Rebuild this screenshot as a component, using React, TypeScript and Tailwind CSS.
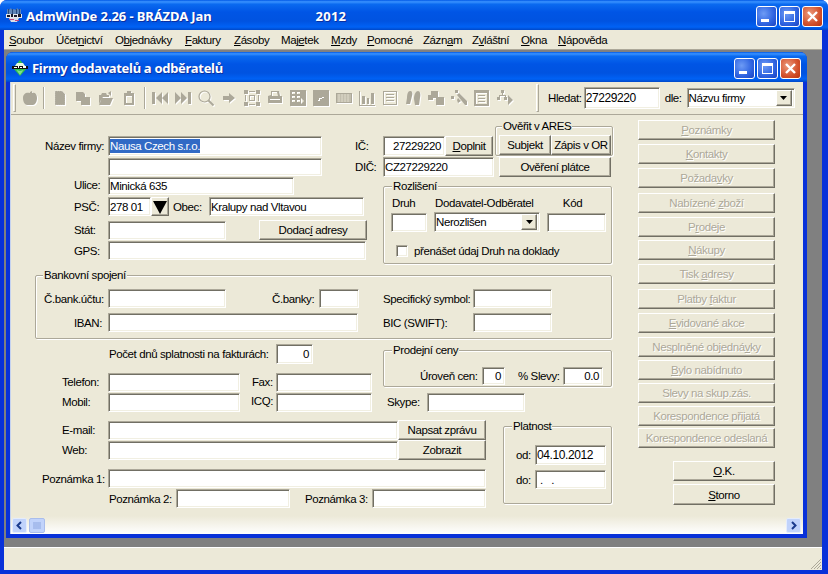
import React from "react";

const sunken =
  "border border-t-[#aca899] border-l-[#aca899] border-b-white border-r-white shadow-[inset_1px_1px_0_#716f64,inset_-1px_-1px_0_#f1efe2] bg-white shrink-0 flex items-center pl-[1px] pr-[3px] whitespace-nowrap overflow-hidden";
const raised =
  "border border-t-white border-l-white border-b-[#716f64] border-r-[#716f64] shadow-[inset_-1px_-1px_0_#aca899] bg-[#ece9d8] shrink-0 flex items-center justify-center whitespace-nowrap";

function Input({ className = "", children }: { className?: string; children?: React.ReactNode }) {
  return <div className={sunken + " " + className}>{children}</div>;
}
function Btn({ className = "", children }: { className?: string; children?: React.ReactNode }) {
  return <div className={raised + " " + className}>{children}</div>;
}
function Off({ className = "", children }: { className?: string; children?: React.ReactNode }) {
  return (
    <div className={raised + " h-[20px] text-[#aca899] [text-shadow:1px_1px_0_#fff] " + className}>{children}</div>
  );
}
function L({ className = "", children }: { className?: string; children?: React.ReactNode }) {
  return <div className={"shrink-0 whitespace-nowrap " + className}>{children}</div>;
}
function Group({ title, className = "", titleClass = "left-[8px]", children }: { title: string; className?: string; titleClass?: string; children?: React.ReactNode }) {
  return (
    <div className={"relative shrink-0 border border-[#aca899] rounded-[2px] shadow-[1px_1px_0_#fff,inset_1px_1px_0_#fff] " + className}>
      <span className={"absolute -top-[8px] bg-[#ece9d8] px-[1px] leading-[14px] whitespace-nowrap " + titleClass}>{title}</span>
      {children}
    </div>
  );
}
function Arrow({ small = false }: { small?: boolean }) {
  return small ? (
    <svg width="7" height="4" viewBox="0 0 7 4"><path d="M0 0h7L3.5 4z" fill="#000" /></svg>
  ) : (
    <svg width="14" height="14" viewBox="0 0 14 14"><path d="M0 1h14L7 14z" fill="#000" /></svg>
  );
}
function WinBtn({ kind }: { kind: "min" | "max" | "close" }) {
  const bg =
    kind === "close"
      ? "bg-[radial-gradient(circle_at_35%_35%,#ec9a7c,#d3512c_60%,#b9330f)]"
      : "bg-[radial-gradient(circle_at_35%_35%,#6d9bf5,#2e63e0_60%,#1c42c0)]";
  return (
    <div className={"w-[21px] h-[21px] rounded-[3px] border border-white flex items-center justify-center shrink-0 " + bg}>
      <svg width="15" height="15" viewBox="0 0 15 15">
        {kind === "min" && <rect x="2" y="10" width="8" height="3" fill="#fff" />}
        {kind === "max" && <path d="M2 2h11v11H2zM3 5v7h9V5z" fill="#fff" fillRule="evenodd" />}
        {kind === "close" && <path d="M3 3l9 9M12 3l-9 9" stroke="#fff" strokeWidth="2.4" />}
      </svg>
    </div>
  );
}

const G = "#aca899";
const icons: React.ReactNode[] = [
  <path d="M8 2l2-1v2c3-1 5 1 5 5 0 4-2 7-4 7H5C3 15 1 12 1 8c0-4 3-6 7-5z" fill={G} />,
  <path d="M3 1h7l3 3v11H3z" fill={G} stroke="#fff" strokeWidth=".3" strokeDasharray="1 1" />,
  <path d="M1 2h7l2 2v3h5v8H6v-4H1z" fill={G} />,
  <path d="M1 14V5h2l1-2h4l1 2h2v2H5l-2 3zM1 15l3-7h11l-3 7zM10 3l3-2v5z" fill={G} />,
  <path d="M3 3h3V1h4v2h3v12H3zM5 6v7h6V6z" fill={G} fillRule="evenodd" />,
];
const icons2: React.ReactNode[] = [
  <path d="M0 2h3v12H0zM10 2v12L4 8zM16 2v12L10 8z" fill={G} />,
  <path d="M0 2v12l6-6zM6 2v12l6-6zM13 2h3v12h-3z" fill={G} />,
  <g fill="none" stroke={G}><circle cx="6.5" cy="6.5" r="5.5" strokeWidth="1.2" /><path d="M10.5 10.5l5 5" strokeWidth="2" /></g>,
  <path d="M2 6h6V3l6 5-6 5v-3H2z" fill={G} />,
  <path d="M0 0h4v4H0zM12 0h4v4h-4zM0 12h4v4H0zM12 12h4v4h-4zM5 1h6v1H5zM1 5h1v6H1zM14 5h1v6h-1zM5 14h6v1H5zM5 5h6v6H5zM6 6v4h4V6z" fill={G} fillRule="evenodd" />,
  <path d="M4 1h8l1 5h2v7H1V6l3-1zM5 2v4h6l-1-4zM3 9v1h10V9z" fill={G} fillRule="evenodd" />,
  <path d="M0 0h16v16H0zM2 2v2h3V2zM7 2v2h3V2zM2 6v2h3V6zM7 6v2h3V6zM2 10v2h3v-2zM7 10v2h3v-2zM11 8l3 3-3 3z" fill={G} fillRule="evenodd" />,
  <path d="M0 0h16v16H0zM5 10v1h2V9h2V8H6v2zM9 7v1h2V7z" fill={G} fillRule="evenodd" />,
  <g><rect x="0" y="3" width="16" height="10" fill={G} /><path d="M1 5h14M1 7h14M1 9h14M1 11h14M3 4v8M6 4v8M9 4v8M12 4v8" stroke="#ece9d8" strokeWidth=".7" /></g>,
  <path d="M0 1h1v14h15v1H0zM3 6h3v8H3zM8 8h2v6H8zM12 3h3v11h-3z" fill={G} />,
  <path d="M1 1h14v14H1zM2 2v12h12V2zM4 4h8v1H4zM4 7h8v1H4zM4 10h8v1H4z" fill={G} fillRule="evenodd" />,
  <path d="M5 1c2 0 3 2 2 5l-2 8H1l1-6c0-4 1-7 3-7zM13 1c2 0 3 3 2 7l-1 7h-4l-1-6c0-5 2-8 4-8z" fill={G} />,
  <g fill={G}><rect x="3" y="1" width="7" height="7" /><rect x="0" y="5" width="5" height="5" /><rect x="8" y="7" width="8" height="8" /></g>,
  <g fill={G}><rect x="4" y="0" width="3" height="3" /><rect x="0" y="6" width="3" height="3" /><path d="M6 5l2-2 8 8v4h-2zM7 8l3 3-3 2-1-3z" /></g>,
  <path d="M0 0h15v16H0zM2 3v11h11V3zM4 5h7v1H4zM4 8h7v1H4zM4 11h7v1H4z" fill={G} fillRule="evenodd" />,
  <g fill={G}><rect x="4" y="0" width="3" height="3" /><rect x="0" y="7" width="3" height="3" /><rect x="7" y="7" width="3" height="3" /><path d="M5 3h1v2h3v2H8V6H3v1H2V5h3zM11 5l5 5-5 5z" /></g>,
];

function Tb({ children }: { children: React.ReactNode }) {
  return (
    <div className="w-[23px] h-[16px] flex items-center justify-center shrink-0">
      <svg width="16" height="16" viewBox="0 0 16 16" className="drop-shadow-[1px_1px_0_#fff]">{children}</svg>
    </div>
  );
}
const Sep = ({ className = "" }: { className?: string }) => (
  <div className={"w-[2px] h-[22px] bg-[#aca899] border-r border-white shrink-0 " + className} />
);
const Grip = ({ className = "" }: { className?: string }) => (
  <div className={"w-[3px] h-[28px] bg-[#ece9d8] border border-t-white border-l-white border-b-[#aca899] border-r-[#aca899] shrink-0 " + className} />
);

const menu: [string, React.ReactNode][] = [
  ["w-[47px]", <><u>S</u>oubor</>],
  ["w-[59px]", <>Účet<u>n</u>ictví</>],
  ["w-[70px]", <>O<u>b</u>jednávky</>],
  ["w-[49px]", <><u>F</u>aktury</>],
  ["w-[47px]", <><u>Z</u>ásoby</>],
  ["w-[50px]", <>Maj<u>e</u>tek</>],
  ["w-[36px]", <><u>M</u>zdy</>],
  ["w-[56px]", <><u>P</u>omocné</>],
  ["w-[49px]", <>Zázn<u>a</u>m</>],
  ["w-[49px]", <>Z<u>v</u>láštní</>],
  ["w-[37px]", <><u>O</u>kna</>],
  ["w-[60px]", <><u>N</u>ápověda</>],
];

const side: [string, React.ReactNode][] = [
  ["", <><u>P</u>oznámky</>],
  ["mt-[4px]", <><u>K</u>ontakty</>],
  ["mt-[4px]", <>Požada<u>v</u>ky</>],
  ["mt-[5px]", <>Nabízené <u>z</u>boží</>],
  ["mt-[4px]", <>P<u>r</u>odeje</>],
  ["mt-[3px]", <><u>N</u>ákupy</>],
  ["mt-[4px]", <>Tisk <u>a</u>dresy</>],
  ["mt-[5px]", <>Platby <u>f</u>aktur</>],
  ["mt-[4px]", <><u>E</u>vidované akce</>],
  ["mt-[4px]", <>Nesplněné objedná<u>v</u>ky</>],
  ["mt-[3px]", <><u>B</u>ylo nabídnuto</>],
  ["mt-[3px]", <>Slevy na skup.zás.</>],
  ["mt-[3px]", <>Korespondence přijatá</>],
  ["mt-[2px]", <>Korespondence odeslaná</>],
];

export default function App() {
  return (
    <div className="w-[828px] h-[574px] flex flex-col overflow-hidden bg-[#0831d9] text-black text-[11.5px] tracking-[-0.4px] leading-[14px] font-['Liberation_Sans',Arial,sans-serif] rounded-t-[7px]">
      {/* main title bar */}
      <div className="h-[30px] shrink-0 flex items-center pt-[2px] pl-[6px] pr-[5px] bg-[linear-gradient(180deg,#0058e6_0%,#3a93ff_6%,#0a6af0_14%,#0055e5_40%,#0053e0_70%,#0062f5_90%,#0048c8_100%)]">
        <svg width="16" height="16" viewBox="0 0 16 16" className="shrink-0">
          <path d="M1 1l2 1 2-2 1 2 2-1 2 1 1-2 2 2 2-1v7H1z" fill="#5f86b8" />
          <path d="M2 1h1v6H2zM6 1h1v6H6zM10 1h1v6h-1zM13 1h1v6h-1z" fill="#284a80" />
          <path d="M0 6h16v4H0z" fill="#e4e8f0" />
          <path d="M1 7h3v2H1zM5 6h2v3H5zM8 7h3v2H8zM12 6h3v3h-3z" fill="#1a1a2a" />
          <path d="M3 10h10l-2 4H5z" fill="#d9dde6" />
          <path d="M3 11h5v1H3zM9 12h4v1H9z" fill="#c04a80" />
        </svg>
        <span className="ml-[4px] text-white font-bold text-[13px] tracking-[-0.1px] font-['Noto_Sans',sans-serif] [text-shadow:1px_1px_0_#0a2fa0]">AdmWinDe 2.26 - BRÁZDA Jan</span>
        <span className="ml-[104px] text-white font-bold text-[13px] tracking-[0.2px] font-['Noto_Sans',sans-serif] [text-shadow:1px_1px_0_#0a2fa0]">2012</span>
        <div className="ml-auto flex gap-[2px]"><WinBtn kind="min" /><WinBtn kind="max" /><WinBtn kind="close" /></div>
      </div>

      {/* inner frame */}
      <div className="flex-1 min-h-0 mx-[4px] mb-[4px] mr-[6px] flex flex-col bg-[#ece9d8]">
        {/* menu */}
        <div className="h-[20px] shrink-0 flex items-center pl-[5px] border-b border-[#aca899]">
          {menu.map(([c, m], i) => <span key={i} className={"whitespace-nowrap shrink-0 " + c}>{m}</span>)}
        </div>

        {/* MDI */}
        <div className="h-[498px] shrink-0 bg-[#808080] pl-[2px] pt-[2px] border-b border-white">
          <div className="w-[801px] h-[486px] flex flex-col rounded-t-[7px] overflow-hidden bg-[#0831d9]">
            <div className="h-[30px] shrink-0 flex items-center pt-[2px] pl-[6px] pr-[6px] bg-[linear-gradient(180deg,#0058e6_0%,#3a93ff_6%,#0a6af0_14%,#0055e5_40%,#0053e0_70%,#0062f5_90%,#0048c8_100%)]">
              <svg width="16" height="16" viewBox="0 0 16 16" className="shrink-0">
                <path d="M8 0l7 8-7 8-7-8z" fill="#2fc04a" />
                <path d="M8 11l3.5-1L8 15 4.5 10z" fill="#7ee08a" />
                <path d="M5 3h6l2 3H3z" fill="#e8f8e0" />
                <path d="M0 6h16v3H0z" fill="#111" />
                <path d="M2 7h3v1H2zM6 6h1v2H6zM8 7h2v1H8zM11 6h3v2h-3z" fill="#fff" />
              </svg>
              <span className="ml-[4px] text-white font-bold text-[13px] tracking-[-0.3px] font-['Noto_Sans',sans-serif] [text-shadow:1px_1px_0_#0a2fa0]">Firmy dodavatelů a odběratelů</span>
              <div className="ml-auto flex gap-[2px]"><WinBtn kind="min" /><WinBtn kind="max" /><WinBtn kind="close" /></div>
            </div>

            <div className="flex-1 min-h-0 mx-[4px] mb-[4px] flex flex-col bg-[#ece9d8] border-l border-[#c4d2f0]">
              {/* toolbar */}
              <div className="h-[33px] shrink-0 flex items-center border-b border-[#aca899] pl-[2px]">
                <Grip className="mr-[2px]" />
                <Tb>{icons[0]}</Tb>
                <Sep className="ml-[2px] mr-[3px]" />
                {icons.slice(1).map((ic, i) => <Tb key={i}>{ic}</Tb>)}
                <Sep className="mr-[2px] ml-[4px]" />
                {icons2.map((ic, i) => <Tb key={i}>{ic}</Tb>)}
                <Grip className="ml-[20px]" />
                <span className="ml-[9px]">Hledat:</span>
                <Input className="ml-[2px] w-[76px] h-[22px] text-[12px]">27229220</Input>
                <span className="ml-[5px]">dle:</span>
                <Input className="ml-[5px] w-[108px] h-[20px] !pr-[2px] justify-between">
                  <span>Názvu firmy</span>
                  <Btn className="w-[16px] h-[16px]"><Arrow small /></Btn>
                </Input>
              </div>

              {/* form */}
              <div className="flex-1 min-h-0 flex">
                <div className="w-[619px] shrink-0 flex flex-col pt-[11px]">
                  {/* Block A */}
                  <div className="flex h-[138px] shrink-0">
                    <div className="w-[344px] shrink-0 pt-[10px] flex flex-col">
                      <div className="flex items-center h-[20px]">
                        <L className="w-[97px] pl-[34px]">Název firmy:</L>
                        <Input className="w-[214px] h-[20px]"><span className="bg-[#316ac5] text-white">Nausa Czech s.r.o.</span></Input>
                      </div>
                      <div className="flex mt-[2px]"><Input className="ml-[97px] w-[214px] h-[18px]" /></div>
                      <div className="flex items-center mt-[1px]">
                        <L className="w-[97px] pl-[63px] pb-[2px]">Ulice:</L>
                        <Input className="w-[186px] h-[18px]">Minická 635</Input>
                      </div>
                      <div className="flex items-center mt-[2px]">
                        <L className="w-[97px] pl-[63px]">PSČ:</L>
                        <Input className="w-[43px] h-[19px]">278 01</Input>
                        <Btn className="w-[18px] h-[19px]"><Arrow /></Btn>
                        <L className="w-[40px] pl-[4px]">Obec:</L>
                        <Input className="w-[155px] h-[19px]">Kralupy nad Vltavou</Input>
                      </div>
                      <div className="flex items-center mt-[4px]">
                        <L className="w-[97px] pl-[63px]">Stát:</L>
                        <Input className="w-[118px] h-[19px]" />
                        <Btn className="ml-[33px] w-[108px] h-[20px]"><span>Dodac<u>í</u> adresy</span></Btn>
                      </div>
                      <div className="flex items-center mt-[1px]">
                        <L className="w-[97px] pl-[63px]">GPS:</L>
                        <Input className="w-[258px] h-[19px]" />
                      </div>
                    </div>

                    <div className="flex flex-col">
                      <div className="flex">
                        <div className="w-[140px] pt-[10px] shrink-0">
                          <div className="flex items-center h-[20px]">
                            <L className="w-[28px]">IČ:</L>
                            <Input className="w-[62px] h-[20px] justify-end">27229220</Input>
                            <Btn className="w-[48px] h-[20px]"><span><u>D</u>oplnit</span></Btn>
                          </div>
                          <div className="flex items-center mt-[1px]">
                            <L className="w-[28px]">DIČ:</L>
                            <Input className="w-[111px] h-[20px]">CZ27229220</Input>
                          </div>
                        </div>
                        <div className="w-[118px] shrink-0">
                          <Group title="Ověřit v ARES" titleClass="left-[6px]" className="w-[118px] h-[30px] pl-[3px] pt-[8px] flex">
                            <Btn className="w-[52px] h-[20px]">Subjekt</Btn>
                            <Btn className="w-[60px] h-[20px]">Zápis v OR</Btn>
                          </Group>
                          <Btn className="ml-[4px] mt-[1px] w-[112px] h-[20px]">Ověření plátce</Btn>
                        </div>
                      </div>
                      <Group title="Rozlišení" className="ml-[28px] mt-[9px] w-[229px] h-[78px] pt-[9px]">
                        <div className="flex pl-[7px]">
                          <div className="w-[36px] shrink-0">
                            <L className="pl-[1px]">Druh</L>
                            <Input className="mt-[3px] w-[36px] h-[19px]" />
                          </div>
                          <div className="ml-[7px] w-[106px] shrink-0">
                            <L className="pl-[1px]">Dodavatel-Odběratel</L>
                            <Input className="mt-[2px] w-[106px] h-[20px] !pr-[2px] justify-between">
                              <span>Nerozlišen</span>
                              <Btn className="w-[16px] h-[16px]"><Arrow small /></Btn>
                            </Input>
                          </div>
                          <div className="ml-[7px] w-[59px] shrink-0">
                            <L className="text-center pr-[8px]">Kód</L>
                            <Input className="mt-[3px] w-[59px] h-[19px]" />
                          </div>
                        </div>
                        <div className="flex items-center mt-[12px] pl-[12px]">
                          <Input className="w-[12px] h-[12px]" />
                          <L className="ml-[6px]">přenášet údaj Druh na doklady</L>
                        </div>
                      </Group>
                    </div>
                  </div>

                  {/* Bank */}
                  <Group title="Bankovní spojení" titleClass="left-[7px]" className="ml-[24px] mt-[11px] w-[577px] h-[64px] pt-[13px]">
                    <div className="flex items-center">
                      <L className="w-[72px] pl-[8px]">Č.bank.účtu:</L>
                      <Input className="w-[118px] h-[19px]" />
                      <L className="w-[93px] pl-[46px]">Č.banky:</L>
                      <Input className="w-[40px] h-[19px]" />
                      <L className="w-[114px] pl-[24px]">Specifický symbol:</L>
                      <Input className="w-[79px] h-[19px]" />
                    </div>
                    <div className="flex items-center mt-[5px]">
                      <L className="w-[72px] pl-[38px]">IBAN:</L>
                      <Input className="w-[250px] h-[19px]" />
                      <L className="w-[115px] pl-[25px]">BIC (SWIFT):</L>
                      <Input className="w-[79px] h-[19px]" />
                    </div>
                  </Group>

                  {/* Block C */}
                  <div className="flex mt-[5px] h-[68px] shrink-0">
                    <div className="w-[372px] shrink-0">
                      <div className="flex items-center h-[20px] pl-[98px]">
                        <L className="w-[167px]">Počet dnů splatnosti na fakturách:</L>
                        <Input className="w-[37px] h-[20px] justify-end">0</Input>
                      </div>
                      <div className="flex items-center mt-[9px]">
                        <L className="w-[97px] pl-[51px] pb-[2px]">Telefon:</L>
                        <Input className="w-[132px] h-[19px]" />
                        <L className="w-[36px] pl-[12px] pb-[2px]">Fax:</L>
                        <Input className="w-[96px] h-[19px]" />
                      </div>
                      <div className="flex items-center mt-[1px]">
                        <L className="w-[97px] pl-[51px] pb-[2px]">Mobil:</L>
                        <Input className="w-[132px] h-[19px]" />
                        <L className="w-[36px] pl-[11px] pb-[4px]">ICQ:</L>
                        <Input className="w-[96px] h-[19px]" />
                      </div>
                    </div>
                    <div className="pt-[6px]">
                      <Group title="Prodejní ceny" className="w-[229px] h-[37px] pt-[15px] flex items-center">
                        <L className="ml-[36px] w-[62px]">Úroveň cen:</L>
                        <Input className="w-[23px] h-[18px] justify-end">0</Input>
                        <L className="w-[58px] pl-[13px]">% Slevy:</L>
                        <Input className="w-[40px] h-[18px] justify-end">0.0</Input>
                      </Group>
                      <div className="flex items-center mt-[6px] pl-[4px]">
                        <L className="w-[40px] pb-[2px]">Skype:</L>
                        <Input className="w-[98px] h-[19px]" />
                      </div>
                    </div>
                  </div>

                  {/* Block D */}
                  <div className="flex mt-[8px]">
                    <div className="w-[492px] shrink-0">
                      <div className="flex items-center h-[20px]">
                        <L className="w-[97px] pl-[51px]">E-mail:</L>
                        <Input className="w-[290px] h-[19px]" />
                        <Btn className="w-[88px] h-[20px]">Napsat zprávu</Btn>
                      </div>
                      <div className="flex items-center">
                        <L className="w-[97px] pl-[51px]">Web:</L>
                        <Input className="w-[290px] h-[19px] mt-[1px]" />
                        <Btn className="w-[88px] h-[20px]">Zobrazit</Btn>
                      </div>
                      <div className="flex items-center mt-[9px]">
                        <L className="w-[97px] pl-[31px]">Poznámka 1:</L>
                        <Input className="w-[378px] h-[19px]" />
                      </div>
                      <div className="flex items-center mt-[1px] pl-[98px]">
                        <L className="w-[67px]">Poznámka 2:</L>
                        <Input className="w-[114px] h-[19px]" />
                        <L className="w-[82px] pl-[15px]">Poznámka 3:</L>
                        <Input className="w-[114px] h-[19px]" />
                      </div>
                    </div>
                    <Group title="Platnost" className="mt-[6px] w-[109px] h-[78px] pt-[18px]">
                      <div className="flex items-center pl-[12px]">
                        <L className="w-[19px]">od:</L>
                        <Input className="w-[71px] h-[20px] text-[12px]">04.10.2012</Input>
                      </div>
                      <div className="flex items-center pl-[12px] mt-[5px]">
                        <L className="w-[19px]">do:</L>
                        <Input className="w-[71px] h-[19px]"><span className="pl-[3px] whitespace-pre">.   .</span></Input>
                      </div>
                    </Group>
                  </div>
                </div>

                {/* right buttons */}
                <div className="ml-[8px] w-[137px] shrink-0 flex flex-col pt-[5px]">
                  {side.map(([c, t], i) => <Off key={i} className={c}><span>{t}</span></Off>)}
                  <Btn className="self-end mt-[13px] w-[102px] h-[20px]"><span><u>O</u>.K.</span></Btn>
                  <Btn className="self-end mt-[3px] w-[102px] h-[21px]"><span><u>S</u>torno</span></Btn>
                </div>
              </div>

              {/* scrollbar */}
              <div className="h-[18px] shrink-0 flex items-center px-[1px] bg-[linear-gradient(180deg,#ece9d8,#ffffff)]">
                <div className="w-[15px] h-[15px] rounded-[2px] bg-[#c1d3fb] border border-[#e4ecfd] flex items-center justify-center">
                  <svg width="9" height="9" viewBox="0 0 9 9"><path d="M6 1L2.5 4.5 6 8" fill="none" stroke="#1a3a8c" strokeWidth="2" /></svg>
                </div>
                <div className="ml-[2px] w-[16px] h-[15px] rounded-[2px] bg-[#c1d3fb] border border-[#a9bdec] flex items-center justify-center">
                  <svg width="8" height="7" viewBox="0 0 8 7"><path d="M1 0v7M3 0v7M5 0v7M7 0v7" stroke="#8ea7e0" /></svg>
                </div>
                <div className="ml-auto mr-[1px] w-[15px] h-[15px] rounded-[2px] bg-[#c1d3fb] border border-[#e4ecfd] flex items-center justify-center">
                  <svg width="9" height="9" viewBox="0 0 9 9"><path d="M3 1l3.5 3.5L3 8" fill="none" stroke="#1a3a8c" strokeWidth="2" /></svg>
                </div>
              </div>
            </div>
          </div>
        </div>

        {/* status bar */}
        <div className="flex-1 min-h-0 flex justify-end items-end">
          <svg width="14" height="14" viewBox="0 0 14 14">
            <path d="M13 3L3 13M13 6l-7 7M13 9l-4 4M13 12l-1 1" stroke="#aca899" strokeWidth="1" fill="none" />
          </svg>
        </div>
      </div>
    </div>
  );
}
